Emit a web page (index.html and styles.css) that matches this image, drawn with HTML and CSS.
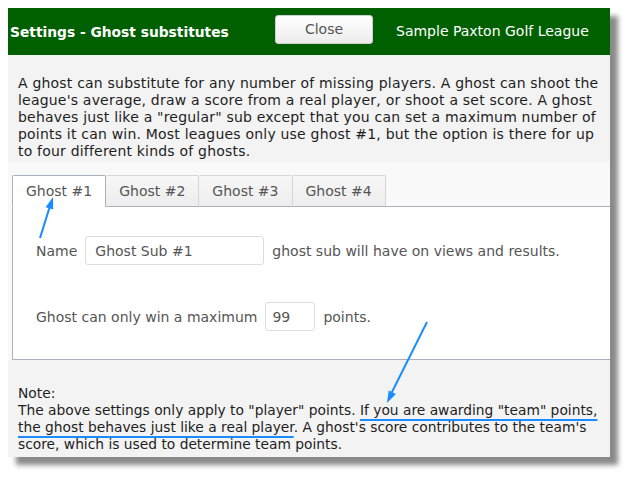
FILE: index.html
```html
<!DOCTYPE html>
<html>
<head>
<meta charset="utf-8">
<link rel="stylesheet" href="styles.css">
</head>
<body>
<div class="panel">
  <div class="header">
    <span class="title">Settings - Ghost substitutes</span>
    <button class="close">Close</button>
    <span class="league">Sample Paxton Golf League</span>
  </div>
  <div class="intro">A ghost can substitute for any number of missing players. A ghost can shoot the league's average, draw a score from a real player, or shoot a set score. A ghost behaves just like a "regular" sub except that you can set a maximum number of points it can win. Most leagues only use ghost #1, but the option is there for up to four different kinds of ghosts.</div>
  <div class="tabs">
    <ul class="nav">
      <li class="tab active">Ghost #1</li>
      <li class="tab">Ghost #2</li>
      <li class="tab">Ghost #3</li>
      <li class="tab">Ghost #4</li>
      <li class="fill"></li>
    </ul>
    <div class="content">
      <div class="row row-name">
        <span>Name</span>
        <span class="field field-name">Ghost Sub #1</span>
        <span>ghost sub will have on views and results.</span>
      </div>
      <div class="row row-max">
        <span>Ghost can only win a maximum</span>
        <span class="field field-max">99</span>
        <span>points.</span>
      </div>
    </div>
  </div>
  <div class="note">Note:<br>The above settings only apply to "player" points. <span class="mark">If you are awarding "team" points,</span> <span class="mark">the ghost behaves just like a real player</span>. A ghost's score contributes to the team's score, which is used to determine team points.</div>
</div>
<svg class="overlay" width="640" height="480" viewBox="0 0 640 480">
  <line x1="40" y1="238" x2="50" y2="206" stroke="#1a8cff" stroke-width="2"/>
  <polygon points="53,197 53.2,209.6 45.6,207.2" fill="#1a8cff"/>
  <line x1="427" y1="322" x2="391" y2="394" stroke="#1a8cff" stroke-width="2"/>
  <polygon points="387,403 395.9,394 388.7,390.4" fill="#1a8cff"/>
</svg>
</body>
</html>
```
FILE: styles.css
```css
html, body {
  margin: 0;
  padding: 0;
  background: #ffffff;
}
body {
  padding: 8px;
  font-family: "DejaVu Sans", Verdana, sans-serif;
  position: relative;
  width: 640px;
  height: 480px;
  box-sizing: border-box;
}
.panel {
  width: 602px;
  height: 449px;
  background: #f3f3f3;
  box-shadow: 8px 8px 5px #8a8a8a;
  display: flex;
  flex-direction: column;
}
.header {
  height: 47px;
  background: #006000;
  display: flex;
  align-items: center;
  color: #ffffff;
}
.title {
  font-weight: bold;
  font-size: 13.8px;
  margin-left: 2px;
  width: 265px;
}
.close {
  width: 98px;
  height: 29px;
  margin-top: -5px;
  border: 1px solid #cfcfcf;
  border-radius: 3px;
  background: linear-gradient(#ffffff, #ececec);
  color: #555555;
  font-family: "DejaVu Sans", Verdana, sans-serif;
  font-size: 14px;
  padding: 0;
}
.league {
  font-size: 14px;
  margin-left: 23px;
  margin-top: -1px;
}
.intro {
  height: 107px;
  box-sizing: border-box;
  padding: 20px 8px 0 10px;
  font-size: 14px;
  letter-spacing: 0.2px;
  line-height: 17px;
  color: #1e1e1e;
}
.tabs {
  background: #f9f9f9;
  padding: 13px 0 0 4px;
}
.nav {
  list-style: none;
  margin: 0;
  padding: 0;
  display: flex;
  height: 32px;
}
.tab {
  box-sizing: border-box;
  height: 32px;
  padding: 0 13px;
  display: flex;
  align-items: center;
  font-size: 14px;
  color: #555555;
  border: 1px solid #d6d6d6;
  border-left: none;
  border-bottom: 1px solid #a9b1c0;
  background: linear-gradient(#f7f7f7, #ededed);
  border-radius: 2px 2px 0 0;
}
.tab.active {
  border: 1px solid #a9b1c0;
  border-bottom: 1px solid #ffffff;
  background: #ffffff;
  padding: 0 13px;
}
.fill {
  flex: 1;
  border-bottom: 1px solid #a9b1c0;
}
.content {
  height: 153px;
  box-sizing: border-box;
  background: #ffffff;
  border-left: 1px solid #a9b1c0;
  border-bottom: 1px solid #a9b1c0;
  padding: 29px 0 0 23px;
  font-size: 14px;
  color: #555555;
}
.row {
  display: flex;
  align-items: center;
  gap: 8px;
}
.row-max {
  margin-top: 37px;
}
.field {
  box-sizing: border-box;
  height: 29px;
  border: 1px solid #dddddd;
  border-radius: 3px;
  display: flex;
  align-items: center;
  padding-left: 9px;
  color: #555555;
}
.field-name {
  width: 179px;
}
.field-max {
  width: 50px;
  padding-left: 6px;
}
.note {
  flex: 1;
  padding: 25px 0 0 10px;
  font-size: 13.8px;
  line-height: 17px;
  color: #1e1e1e;
}
.mark {
  text-decoration: underline;
  text-decoration-color: #1a8cff;
  text-decoration-thickness: 2px;
  text-underline-offset: 4px;
}
.overlay {
  position: absolute;
  left: 0;
  top: 0;
  pointer-events: none;
}
```
